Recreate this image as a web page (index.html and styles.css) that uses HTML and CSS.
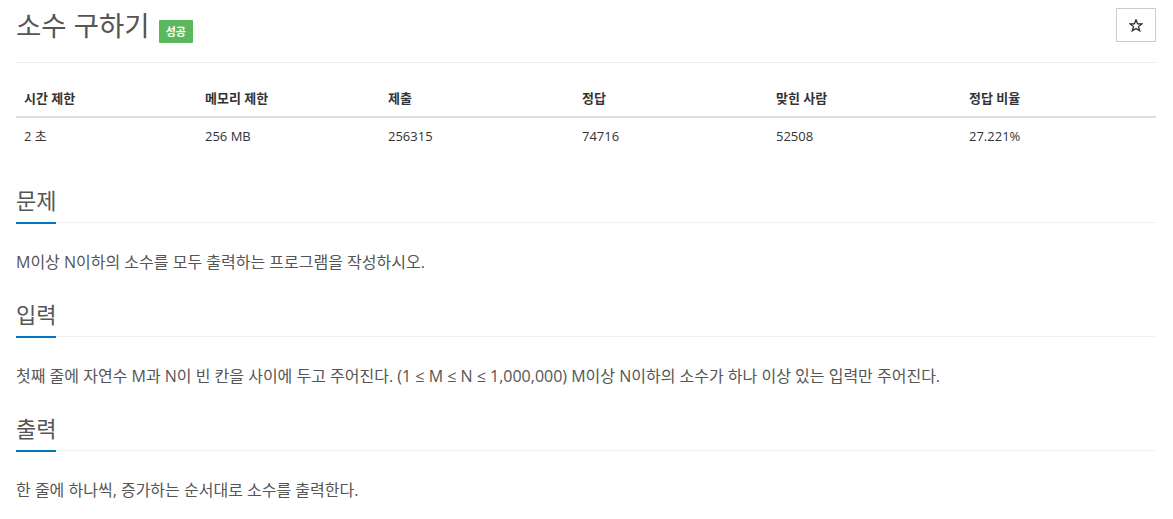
FILE: index.html
```html
<!DOCTYPE html>
<html lang="ko">
<head>
  <meta charset="UTF-8" />
  <meta name="viewport" content="width=device-width, initial-scale=1" />
  <title>소수 구하기</title>
  <link rel="stylesheet" href="styles.css">
</head>
<body>
  <div class="container">
    <div class="problem-header">
      <h1 class="title">
        <span>소수 구하기</span>
        <span class="label-success">성공</span>
      </h1>
      <button class="star-btn" title="즐겨찾기">
        <svg width="14" height="13" viewBox="0 0 14 13">
          <path d="M7 0.8 L8.6 4.8 L12.9 4.9 L9.5 7.6 L10.7 11.8 L7 9.4 L3.3 11.8 L4.5 7.6 L1.1 4.9 L5.4 4.8 Z" fill="none" stroke="#222" stroke-width="1.2" stroke-linejoin="miter" />
        </svg>
      </button>
    </div>

    <table class="problem-info">
      <thead>
        <tr>
          <th class="c1">시간 제한</th>
          <th class="c2">메모리 제한</th>
          <th class="c3">제출</th>
          <th class="c4">정답</th>
          <th class="c5">맞힌 사람</th>
          <th class="c6">정답 비율</th>
        </tr>
      </thead>
      <tbody>
        <tr>
          <td>2 초 </td>
          <td>256 MB</td>
          <td>256315</td>
          <td>74716</td>
          <td>52508</td>
          <td>27.221%</td>
        </tr>
      </tbody>
    </table>

    <section class="problem-section">
      <div class="headline"><h2>문제</h2></div>
      <p>M이상 N이하의 소수를 모두 출력하는 프로그램을 작성하시오.</p>
    </section>

    <section class="problem-section">
      <div class="headline"><h2>입력</h2></div>
      <p>첫째 줄에 자연수 M과 N이 빈 칸을 사이에 두고 주어진다. (1 ≤ M ≤ N ≤ 1,000,000) M이상 N이하의 소수가 하나 이상 있는 입력만 주어진다.</p>
    </section>

    <section class="problem-section">
      <div class="headline"><h2>출력</h2></div>
      <p>한 줄에 하나씩, 증가하는 순서대로 소수를 출력한다.</p>
    </section>
  </div>
</body>
</html>
```

FILE: styles.css
```css
* {
  box-sizing: border-box;
}
body {
  margin: 0;
  font-family: "Open Sans", "Noto Sans CJK KR", sans-serif;
  font-size: 16px;
  color: #555;
  background: #fff;
}

.container {
  width: 1140px;
  margin-left: 16px;
}

.problem-header {
  display: flex;
  justify-content: space-between;
  align-items: flex-start;
  padding: 8px 0 18px;
  border-bottom: 1px solid #eee;
}

.title {
  margin: 0;
  display: flex;
  align-items: flex-start;
  gap: 9px;
  font-size: 27.5px;
  line-height: 36px;
  font-weight: 400;
  color: #555;
}

.label-success {
  margin-top: 12px;
  background: #5cb85c;
  color: #fff;
  font-size: 11px;
  font-weight: 700;
  line-height: 13px;
  padding: 5px 7px;
  border-radius: 1px;
}

.star-btn {
  width: 40px;
  height: 34px;
  padding: 0;
  border: 1px solid #ccc;
  background: #fff;
  display: flex;
  align-items: center;
  justify-content: center;
  cursor: pointer;
}

.problem-info {
  width: 100%;
  border-collapse: collapse;
  margin: 17px 0 29px;
  font-size: 13px;
  color: #333;
}
.problem-info th,
.problem-info td {
  text-align: left;
  padding: 8px;
  line-height: 20px;
}
.problem-info th {
  font-weight: 700;
  border-bottom: 2px solid #ddd;
}
.c1 { width: 181px; }
.c2 { width: 183px; }
.c3 { width: 194px; }
.c4 { width: 194px; }
.c5 { width: 193px; }
.c6 { width: 195px; }

.problem-section {
  margin-bottom: 23px;
}

.headline {
  border-bottom: 1px dotted #dde3ea;
  margin-bottom: 27px;
}
.headline h2 {
  display: inline-block;
  margin: 0 0 -2px;
  padding-bottom: 5px;
  font-size: 22px;
  line-height: 34px;
  font-weight: 400;
  color: #555;
  border-bottom: 2px solid #0076c0;
}

.problem-section p {
  margin: 0;
  line-height: 24px;
}
```
